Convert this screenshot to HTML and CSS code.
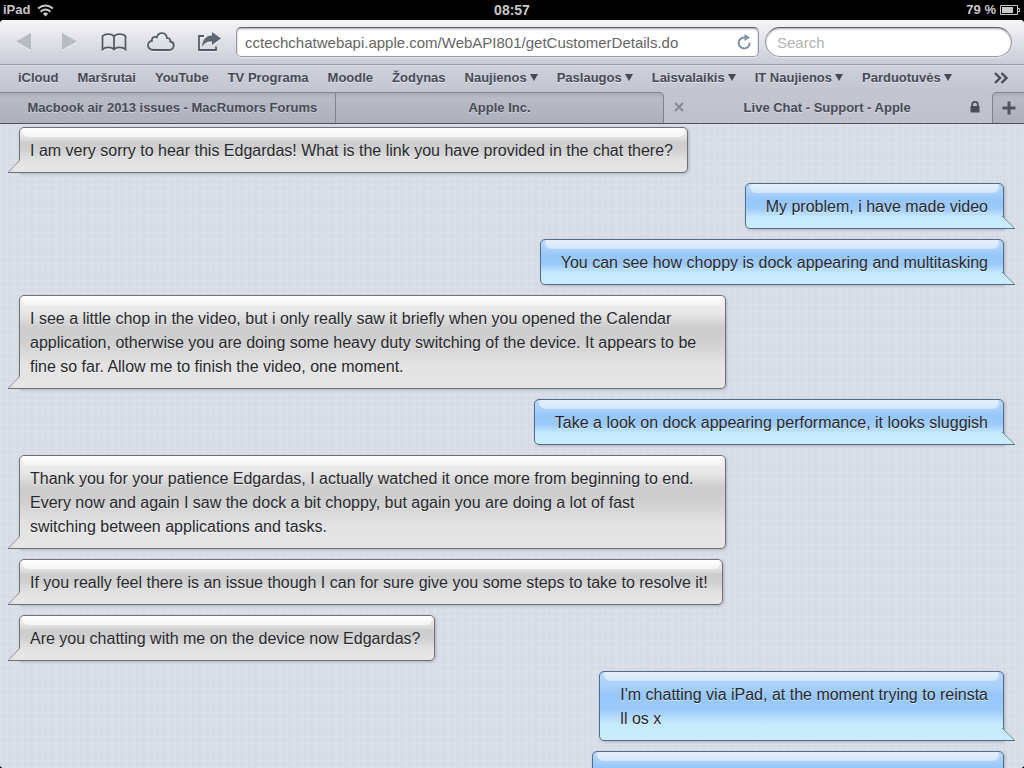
FILE: index.html
```html
<!DOCTYPE html>
<html lang="lt">
<head>
<meta charset="utf-8">
<meta name="viewport" content="width=device-width, initial-scale=1">
<title>Live Chat - Support - Apple</title>
<link rel="stylesheet" href="styles.css">
</head>
<body>
<svg class="defs" aria-hidden="true">
  <symbol id="tail-left" viewBox="0 0 13 14"><path fill="#e5e5e5" d="M13 1.5H12L.5 13H13z"/><path fill="none" stroke="#8e9299" d="M12 1L.5 13"/><path fill="none" stroke="#6f7075" d="M0 13.500H13"/></symbol>
  <symbol id="tail-right" viewBox="0 0 13 14"><path fill="#c9ebfc" d="M0 1.500H1L12.500 13H0z"/><path fill="none" stroke="#6f8ba5" d="M0 1L12.500 13"/><path fill="none" stroke="#4f6d8c" d="M0 13.500H13"/></symbol>
</svg>
<header class="status">
  <div class="carrier"><span>iPad</span>
    <svg width="17" height="13" viewBox="0 0 17 13" fill="none" stroke="#c8c8c8" stroke-width="2"><path d="M1 4.500Q8.500-1.500 16 4.500M3.600 7.700Q8.500 3.400 13.400 7.700"/><path fill="#c8c8c8" stroke="none" d="M5.800 9.800Q8.500 7.400 11.200 9.800L8.500 12.500z"/></svg>
  </div>
  <div class="clock">08:57</div>
  <div class="battery"><span>79 %</span>
    <svg width="21" height="10" viewBox="0 0 21 10"><path fill="none" stroke="#c8c8c8" d="M.5.500H17.500V9.500H.5zM18 3.500H19.500V6.500H18"/><path fill="#c8c8c8" d="M2 2H13V8H2z"/></svg>
  </div>
</header>
<div class="page">
  <nav class="toolbar">
    <button class="tool" type="button" aria-label="Back" disabled><svg width="16" height="18" viewBox="0 0 16 18"><path fill="#b9bbc2" d="M15 0V17L0 8.500z"/></svg></button>
    <button class="tool" type="button" aria-label="Forward" disabled><svg width="16" height="18" viewBox="0 0 16 18"><path fill="#b9bbc2" d="M1 0V17L16 8.500z"/></svg></button>
    <button class="tool" type="button" aria-label="Bookmarks"><svg width="26" height="18" viewBox="0 0 26 18" fill="none" stroke="#555b66" stroke-width="1.800"><path d="M13 3.500C11 .3 4 .3 1.500 3.200V16.500C4 13.600 11 13.600 13 16.500C15 13.600 22 13.600 24.500 16.500V3.200C22 .3 15 .3 13 3.500V16.500"/></svg></button>
    <button class="tool wide" type="button" aria-label="iCloud tabs"><svg width="28" height="20" viewBox="0 0 28 20" fill="none" stroke="#555b66" stroke-width="1.800"><path d="M6.500 18C-.5 18-.5 9.500 5 9C4.300 5.500 7.500 4 9.800 5.500C11.500-.7 19.300-.2 20 6.200C22.500 6 23.500 7.500 23.200 9.500C28.500 10.500 27.500 18 22 18z"/></svg></button>
    <button class="tool" type="button" aria-label="Share"><svg width="24" height="20" viewBox="0 0 24 20"><path fill="none" stroke="#555b66" stroke-width="1.800" d="M7 4H2V18H19V14.500"/><path fill="#5d6672" d="M15 0L24 6.500L15 13V9.500C10.500 9 8 10.500 5 15C5.500 7.500 9 3.800 15 3.500z"/></svg></button>
    <div class="address">
      <input type="text" aria-label="Address" value="cctechchatwebapi.apple.com/WebAPI801/getCustomerDetails.do">
      <button type="button" class="reload" aria-label="Reload"><svg width="14" height="16" viewBox="0 0 14 16"><path fill="none" stroke="#7f92a8" stroke-width="2" d="M8.500 3.500H7A5.500 5.500 0 1 0 12.600 8.500"/><path fill="#7f92a8" d="M7.500 0L13 3.500L7.500 7z"/></svg></button>
    </div>
    <input class="search" type="search" aria-label="Search" placeholder="Search">
  </nav>
  <nav class="bookmarks">
    <a href="#">iCloud</a>
    <a href="#">Maršrutai</a>
    <a href="#">YouTube</a>
    <a href="#">TV Programa</a>
    <a href="#">Moodle</a>
    <a href="#">Žodynas</a>
    <a href="#" class="folder">Naujienos</a>
    <a href="#" class="folder">Paslaugos</a>
    <a href="#" class="folder">Laisvalaikis</a>
    <a href="#" class="folder">IT Naujienos</a>
    <a href="#" class="folder">Parduotuvės</a>
    <button type="button" class="more" aria-label="More bookmarks"><svg width="14" height="12" viewBox="0 0 14 12" fill="none" stroke="#4a4e59" stroke-width="2.400"><path d="M1 1L6 6L1 11M7.500 1L12.500 6L7.500 11"/></svg></button>
  </nav>
  <nav class="tabs">
    <button type="button" class="tab first">Macbook air 2013 issues - MacRumors Forums</button>
    <button type="button" class="tab">Apple Inc.</button>
    <div class="tab current">
      <button type="button" aria-label="Close tab"><svg width="10" height="10" viewBox="0 0 10 10" stroke="#858994" stroke-width="1.800"><path d="M1 1L9 9M9 1L1 9"/></svg></button>
      <span>Live Chat - Support - Apple</span>
      <svg width="10" height="12" viewBox="0 0 10 12"><path fill="#4a4e59" d="M.5 5H9.500V11.500H.5z"/><path fill="none" stroke="#4a4e59" stroke-width="1.800" d="M2.200 6V3.500A2.800 2.600 0 0 1 7.800 3.500V6"/></svg>
    </div>
    <button type="button" class="tab add" aria-label="New tab"><svg width="14" height="14" viewBox="0 0 14 14" stroke="#50545f" stroke-width="3"><path d="M7 .5V13.500M.5 7H13.500"/></svg></button>
  </nav>
  <main class="chat">
    <p class="msg agent">I am very sorry to hear this Edgardas! What is the link you have provided in the chat there?<svg class="tail"><use href="#tail-left"/></svg></p>
    <p class="msg user">My problem, i have made video<svg class="tail"><use href="#tail-right"/></svg></p>
    <p class="msg user">You can see how choppy is dock appearing and multitasking<svg class="tail"><use href="#tail-right"/></svg></p>
    <p class="msg agent">I see a little chop in the video, but i only really saw it briefly when you opened the Calendar application, otherwise you are doing some heavy duty switching of the device. It appears to be fine so far. Allow me to finish the video, one moment.<svg class="tail"><use href="#tail-left"/></svg></p>
    <p class="msg user">Take a look on dock appearing performance, it looks sluggish<svg class="tail"><use href="#tail-right"/></svg></p>
    <p class="msg agent">Thank you for your patience Edgardas, I actually watched it once more from beginning to end. Every now and again I saw the dock a bit choppy, but again you are doing a lot of fast<br>switching between applications and tasks.<svg class="tail"><use href="#tail-left"/></svg></p>
    <p class="msg agent">If you really feel there is an issue though I can for sure give you some steps to take to resolve it!<svg class="tail"><use href="#tail-left"/></svg></p>
    <p class="msg agent">Are you chatting with me on the device now Edgardas?<svg class="tail"><use href="#tail-left"/></svg></p>
    <p class="msg user">I'm chatting via iPad, at the moment trying to reinsta<br>ll os x<svg class="tail"><use href="#tail-right"/></svg></p>
    <p class="msg user pending">&nbsp;</p>
  </main>
</div>
</body>
</html>
```
FILE: styles.css
```css
* { box-sizing: border-box; }
body {
  margin: 0;
  height: 100vh;
  display: flex;
  flex-direction: column;
  overflow: hidden;
  background: #000;
  font-family: "Liberation Sans", Arial, sans-serif;
  color: #464a55;
}
button { border: 0; padding: 0; background: none; font: inherit; color: inherit; }
svg { display: block; flex: none; }
.defs { position: absolute; width: 0; height: 0; }

.status {
  flex: none;
  height: 20px;
  padding: 0 3px;
  display: grid;
  grid-template-columns: 1fr auto 1fr;
  align-items: center;
  font-size: 13px;
  font-weight: bold;
  line-height: 18px;
  color: #c8c8c8;
}
.clock { font-size: 14px; }
.carrier, .battery { display: flex; align-items: center; gap: 7px; }
.battery { justify-content: flex-end; gap: 4px; }

.page {
  flex: 1;
  min-height: 0;
  display: flex;
  flex-direction: column;
  overflow: hidden;
  border-radius: 4px;
  background: #d9dee8;
}

.toolbar {
  flex: none;
  height: 45px;
  display: flex;
  align-items: center;
  padding: 0 12px 0 1px;
  background: linear-gradient(#f6f6f9, #c9cbd6);
  border-bottom: 1px solid #9a9ca9;
}
.tool { width: 45px; height: 40px; display: grid; place-items: center; }
.tool.wide { width: 50px; }
.tool svg { filter: drop-shadow(0 1px 0 rgba(255, 255, 255, 0.6)); }
.address {
  flex: 506;
  height: 30px;
  margin: 0 6px 0 5px;
  padding: 0 7px 0 8px;
  display: flex;
  align-items: center;
  background: #fff;
  border: 1px solid #9698a2;
  border-top-color: #62646c;
  border-radius: 5px;
  box-shadow: inset 0 1px 2px rgba(0, 0, 0, 0.35), 0 1px 0 rgba(255, 255, 255, 0.5);
}
.address input {
  flex: 1;
  min-width: 0;
  padding: 0;
  border: 0;
  background: none;
  font: 15px "Liberation Sans", Arial, sans-serif;
  color: #666;
}
.search {
  flex: 223;
  min-width: 0;
  height: 30px;
  padding: 0 11px;
  appearance: none;
  background: #fff;
  border: 1px solid #9698a2;
  border-top-color: #62646c;
  border-radius: 15px;
  box-shadow: inset 0 1px 2px rgba(0, 0, 0, 0.35), 0 1px 0 rgba(255, 255, 255, 0.5);
  font: 15px "Liberation Sans", Arial, sans-serif;
}
.search::placeholder { color: #b3b3b3; }

.bookmarks {
  flex: none;
  height: 27px;
  padding: 0 16px 3px 18px;
  display: flex;
  align-items: center;
  gap: 19px;
  background: linear-gradient(#cdd0da, #c3c5d1);
  border-top: 1px solid #dadce4;
  font-size: 13px;
  font-weight: bold;
  white-space: nowrap;
}
.bookmarks a {
  color: #464a55;
  text-decoration: none;
  text-shadow: 0 1px 0 rgba(255, 255, 255, 0.5);
}
.folder::after {
  content: "";
  display: inline-block;
  margin: 0 0 1px 3px;
  border: 4px solid transparent;
  border-top: 7px solid #464a55;
  border-bottom: 0;
}
.more { margin-left: auto; }

.tabs {
  flex: none;
  height: 32px;
  display: flex;
  background: #c1c4d0;
  border-bottom: 1px solid #4c4f5c;
  font-size: 13px;
  font-weight: bold;
}
.tab {
  flex: 329;
  min-width: 0;
  padding: 0 10px 1px;
  background: linear-gradient(#a9abb8, #b9bbc7 5px, #adafbc);
  border-top: 1px solid #7f818e;
  border-right: 1px solid #7f818e;
  border-top-right-radius: 5px;
  text-shadow: 0 1px 0 rgba(255, 255, 255, 0.4);
}
.tab.first { flex: 326; padding-left: 20px; border-top-right-radius: 0; }
.tab.current {
  flex: 327;
  display: flex;
  align-items: center;
  padding-right: 12px;
  background: linear-gradient(#c3c5d1, #bec0cc);
  border: 0;
}
.current span { flex: 1; text-align: center; }
.tab.add {
  flex: none;
  width: 32px;
  padding: 0;
  display: grid;
  place-items: center;
  border-left: 1px solid #7f818e;
  border-right: 0;
  border-radius: 5px 0 0 0;
}

.chat {
  flex: 1;
  min-height: 0;
  overflow: hidden;
  padding: 3px 20px 0 19px;
  display: flex;
  flex-direction: column;
  align-items: flex-start;
  gap: 10px;
  font-size: 16px;
  line-height: 24px;
  color: #26282c;
  background:
    repeating-linear-gradient(90deg, rgba(255, 255, 255, 0.08) 0 1px, transparent 1px 3px, rgba(160, 175, 205, 0.05) 3px 4px, transparent 4px 7px),
    repeating-linear-gradient(rgba(255, 255, 255, 0.07) 0 1px, transparent 1px 4px, rgba(160, 175, 205, 0.04) 4px 5px, transparent 5px 6px),
    #d8dde7;
}
.msg {
  position: relative;
  flex: none;
  max-width: 707px;
  margin: 0;
  padding: 11px 14px 9px 10px;
  border: 1px solid #6f7075;
  border-radius: 5px;
  text-shadow: 0 1px 0 rgba(255, 255, 255, 0.6);
  box-shadow: 1px 1px 3px rgba(0, 0, 0, 0.2);
}
.msg::before {
  content: "";
  position: absolute;
  inset: 0 2px auto;
  height: 9px;
  border-radius: 3px 3px 8px 8px;
  background: linear-gradient(#fff, #f3f3f3);
}
.agent {
  border-bottom-left-radius: 0;
  background: linear-gradient(#f4f4f4, #e4e4e4 20%, #cdcdcd 34%, #cfcfcf 48%, #e3e3e3 75%, #e6e6e6);
}
.user {
  align-self: flex-end;
  padding: 11px 15px 9px 20px;
  border-color: #4f6d8c;
  border-bottom-right-radius: 0;
  background: linear-gradient(#b9d8fa, #a8d0fa 22%, #97c7fa 34%, #9bcafa 55%, #c5e8fc 75%, #cbeefd);
}
.user::before {
  inset: 0 4px auto;
  background: linear-gradient(#e6f2fe, #d2e6fb);
}
.tail { position: absolute; bottom: -1px; width: 13px; height: 14px; }
.agent .tail { left: -12px; }
.user .tail { right: -12px; }
.pending { width: 412px; }
```
